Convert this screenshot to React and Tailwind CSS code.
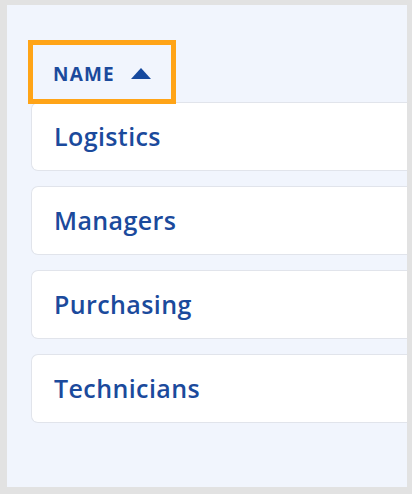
export default function App() {
  const groups = ['Logistics', 'Managers', 'Purchasing', 'Technicians'];

  return (
    <div className="w-[412px] h-[494px] bg-[#e2e2e2] pt-[5px] pl-[7px] pr-[5px] pb-[7px]" style={{ fontFamily: '"Open Sans", Lato, sans-serif' }}>
      <div className="h-full bg-[#f1f5fd] overflow-hidden pt-[35px]">
        <div className="relative z-10 ml-[21px] w-[148px] h-[64px] border-[5px] border-[#ffa417] flex items-center pl-[20px] pt-[4px] gap-[16px]">
          <span className="text-[19px] font-bold text-[#1b4a9c] tracking-[1.2px]">NAME</span>
          <svg width="20" height="11" viewBox="0 0 20 11" className="mt-[-1px]">
            <path d="M10 0 L20 11 L0 11 Z" fill="#174a9e" />
          </svg>
        </div>
        <div className="mt-[-2px] ml-[24px] flex flex-col gap-[15px]">
          {groups.map((name) => (
            <div key={name} className="h-[69px] bg-white border border-[#e1e4eb] rounded-l-[7px] border-r-0 flex items-center pl-[22px]">
              <span className="text-[25px] font-semibold text-[#1b4a9c] tracking-[0.4px]">{name}</span>
            </div>
          ))}
        </div>
      </div>
    </div>
  );
}
